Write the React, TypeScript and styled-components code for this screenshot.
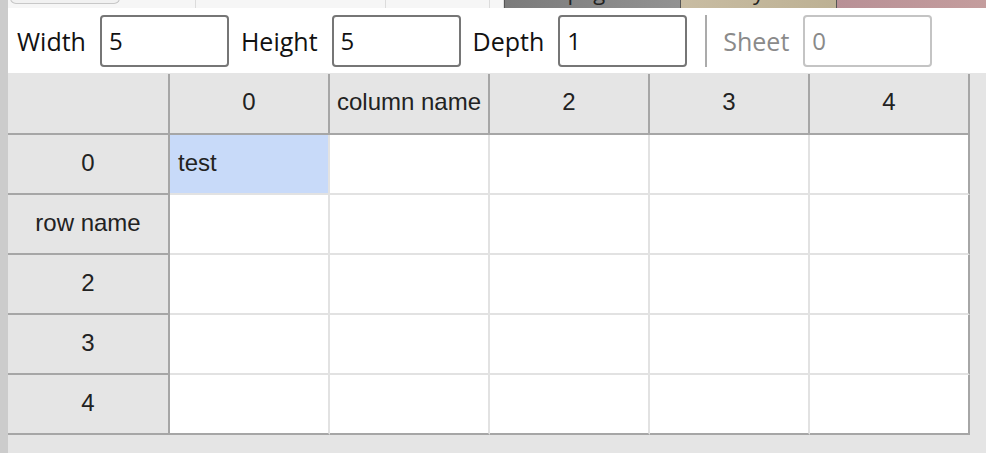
import * as React from 'react';
import styled, { createGlobalStyle } from 'styled-components';

const GlobalStyle = createGlobalStyle`
  html, body {
    margin: 0;
    padding: 0;
    height: 100%;
    overflow: hidden;
  }
  #root {
    height: 100%;
  }
`;

const Page = styled.div`
  display: flex;
  width: 986px;
  height: 453px;
  overflow: hidden;
`;

const Rail = styled.div`
  width: 8px;
  flex: none;
  background: #cccccc;
`;

const Main = styled.div`
  flex: 1;
  display: flex;
  flex-direction: column;
  min-width: 0;
`;

const TabStrip = styled.div`
  height: 8px;
  flex: none;
  display: flex;
  background: #f6f6f6;
  overflow: hidden;
`;

const Tab = styled.div`
  width: 110px;
  height: 6px;
  margin-left: 2px;
  margin-top: -2px;
  border: 1px solid #c8c8c8;
  border-radius: 0 0 6px 6px;
  background: #f1f1f1;
  box-sizing: border-box;
  flex: none;
`;

const TabGap = styled.div<{ $w: number }>`
  width: ${(p) => p.$w}px;
  flex: none;
  border-right: 1px solid #dcdcdc;
`;

const Thumb = styled.div<{ $bg: string; $w: number }>`
  width: ${(p) => p.$w}px;
  flex: none;
  background: ${(p) => p.$bg};
  border-left: 1px solid #555;
  font-family: 'Open Sans', sans-serif;
  font-size: 22px;
  line-height: 1;
  color: #222;
  text-align: center;
  overflow: hidden;
`;

const ThumbText = styled.span`
  display: block;
  margin-top: -20px;
`;

const Toolbar = styled.div`
  height: 65px;
  flex: none;
  display: flex;
  align-items: center;
  background: #ffffff;
  padding-left: 9px;
  font-family: 'Open Sans', 'Noto Sans', sans-serif;
  font-size: 25px;
  color: #111;
`;

const Label = styled.span<{ $muted?: boolean }>`
  color: ${(p) => (p.$muted ? '#8a8a8a' : '#111')};
  margin-right: 14px;
`;

const Field = styled.input<{ $muted?: boolean }>`
  width: 129px;
  height: 52px;
  box-sizing: border-box;
  border: 2px solid ${(p) => (p.$muted ? '#c4c4c4' : '#767676')};
  border-radius: 4px;
  padding: 0 7px;
  font-family: inherit;
  font-size: 24px;
  color: ${(p) => (p.$muted ? '#8a8a8a' : '#111')};
  background: #fff;
  margin-right: 12px;
  outline: none;
`;

const Divider = styled.div`
  width: 2px;
  height: 52px;
  background: #ababab;
  margin: 0 16px 0 6px;
`;

const GridArea = styled.div`
  flex: 1;
  background: #e5e5e5;
  padding-top: 1px;
`;

const Sheet = styled.div`
  display: grid;
  grid-template-columns: 162px repeat(5, 160px);
  grid-template-rows: 61px repeat(5, 60px);
  font-family: 'Liberation Sans', Arial, sans-serif;
  font-size: 24px;
  color: #222;
`;

const Cell = styled.div<{ $head?: boolean; $right?: boolean; $bottom?: boolean; $selected?: boolean }>`
  box-sizing: border-box;
  display: flex;
  align-items: center;
  justify-content: ${(p) => (p.$head ? 'center' : 'flex-start')};
  padding: 0 8px 3px;
  white-space: nowrap;
  background: ${(p) => (p.$head ? '#e5e5e5' : p.$selected ? '#c8daf9' : '#ffffff')};
  border-right: 2px solid ${(p) => (p.$head || p.$right ? '#a6a6a6' : '#e2e2e2')};
  border-bottom: 2px solid ${(p) => (p.$head || p.$bottom ? '#a6a6a6' : '#e2e2e2')};
`;

const columns = ['0', 'column name', '2', '3', '4'];
const rows = ['0', 'row name', '2', '3', '4'];

export default function App() {
  return (
    <>
      <GlobalStyle />
      <Page>
        <Rail />
        <Main>
          <TabStrip>
            <Tab />
            <TabGap $w={75} />
            <TabGap $w={189} />
            <TabGap $w={103} />
            <TabGap $w={13} />
            <Thumb $bg="linear-gradient(90deg, #7b7b7b, #929292)" $w={175}>
              <ThumbText>page</ThumbText>
            </Thumb>
            <Thumb $bg="linear-gradient(90deg, #c8bca2, #bdb194)" $w={155}>
              <ThumbText>y</ThumbText>
            </Thumb>
            <Thumb $bg="linear-gradient(90deg, #b89096, #c59e9e)" $w={160} />
          </TabStrip>
          <Toolbar>
            <Label>Width</Label>
            <Field defaultValue="5" />
            <Label>Height</Label>
            <Field defaultValue="5" />
            <Label>Depth</Label>
            <Field defaultValue="1" />
            <Divider />
            <Label $muted>Sheet</Label>
            <Field $muted disabled defaultValue="0" />
          </Toolbar>
          <GridArea>
            <Sheet>
              <Cell $head />
              {columns.map((c) => (
                <Cell key={c} $head>
                  {c}
                </Cell>
              ))}
              {rows.map((r, ri) => (
                <React.Fragment key={r}>
                  <Cell $head>{r}</Cell>
                  {columns.map((c, ci) => (
                    <Cell
                      key={c}
                      $right={ci === columns.length - 1}
                      $bottom={ri === rows.length - 1}
                      $selected={ri === 0 && ci === 0}
                    >
                      {ri === 0 && ci === 0 ? 'test' : ''}
                    </Cell>
                  ))}
                </React.Fragment>
              ))}
            </Sheet>
          </GridArea>
        </Main>
      </Page>
    </>
  );
}
